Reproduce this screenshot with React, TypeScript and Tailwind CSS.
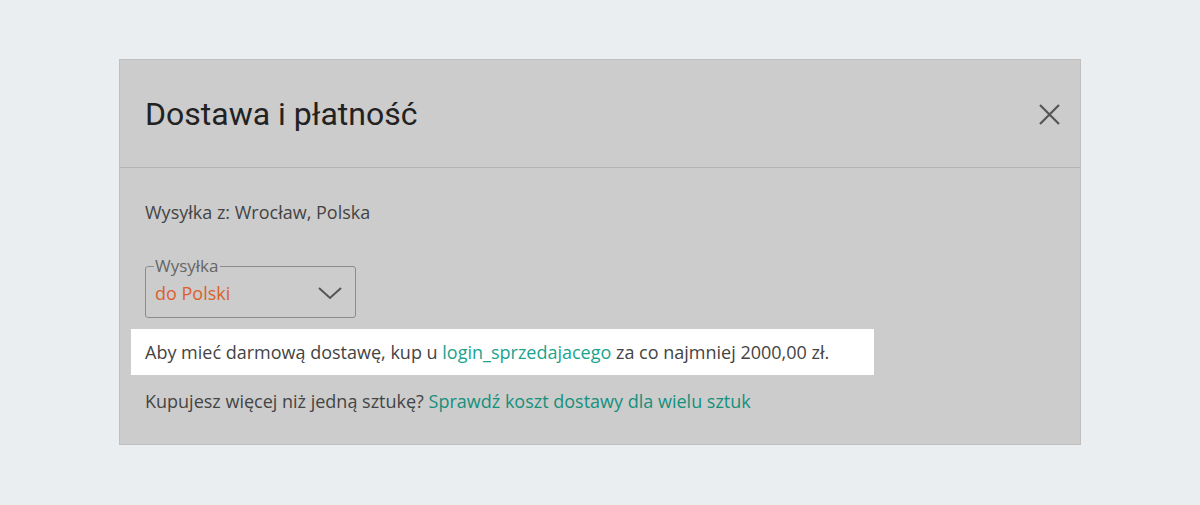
export default function App() {
  return (
    <div className="min-h-[505px] bg-[#eaeef1] pt-[59px] pl-[119px]" style={{ fontFamily: '"Open Sans", sans-serif' }}>
      <div className="w-[962px] h-[386px] bg-[#cccccc] border border-[#bfbfbf]">
        {/* Header */}
        <div className="h-[108px] border-b border-[#b3b3b3] flex items-center justify-between pl-[25px] pr-[20px]">
          <h1 className="text-[32px] text-[#222] font-normal" style={{ fontFamily: 'Roboto, sans-serif' }}>
            Dostawa i płatność
          </h1>
          <svg width="21" height="21" viewBox="0 0 21 21" className="mt-[2px]">
            <path d="M1 1L20 20M20 1L1 20" stroke="#555" strokeWidth="2.2" fill="none" />
          </svg>
        </div>

        {/* Body */}
        <div className="px-[25px] pt-[32px]">
          <p className="text-[18px] text-[#444] leading-[24px]">Wysyłka z: Wrocław, Polska</p>

          <fieldset className="mt-[35px] w-[211px] h-[59px] border border-[#8c8c8c] rounded-[3px] pl-[9px] pr-[12px]">
            <legend className="text-[17px] text-[#666] px-[1px] leading-[14px] -ml-[1px]">Wysyłka</legend>
            <div className="flex items-center justify-between mt-[8px] h-[24px]">
              <span className="text-[18px] leading-[24px] text-[#d9622b]">do Polski</span>
              <svg width="26" height="16" viewBox="0 0 26 16">
                <path d="M2 3L13 13L24 3" stroke="#555" strokeWidth="2" fill="none" />
              </svg>
            </div>
          </fieldset>

          <div className="mt-[11px] -ml-[14px] w-[743px] h-[46px] bg-white flex items-center pl-[14px]">
            <p className="text-[18px] leading-[24px] text-[#444]">
              Aby mieć darmową dostawę, kup u <span className="text-[#1aa38f]">login_sprzedajacego</span> za co najmniej 2000,00 zł.
            </p>
          </div>

          <p className="mt-[14px] text-[18px] text-[#444] leading-[24px]">
            Kupujesz więcej niż jedną sztukę? <span className="text-[#14907c]">Sprawdź koszt dostawy dla wielu sztuk</span>
          </p>
        </div>
      </div>
    </div>
  );
}
